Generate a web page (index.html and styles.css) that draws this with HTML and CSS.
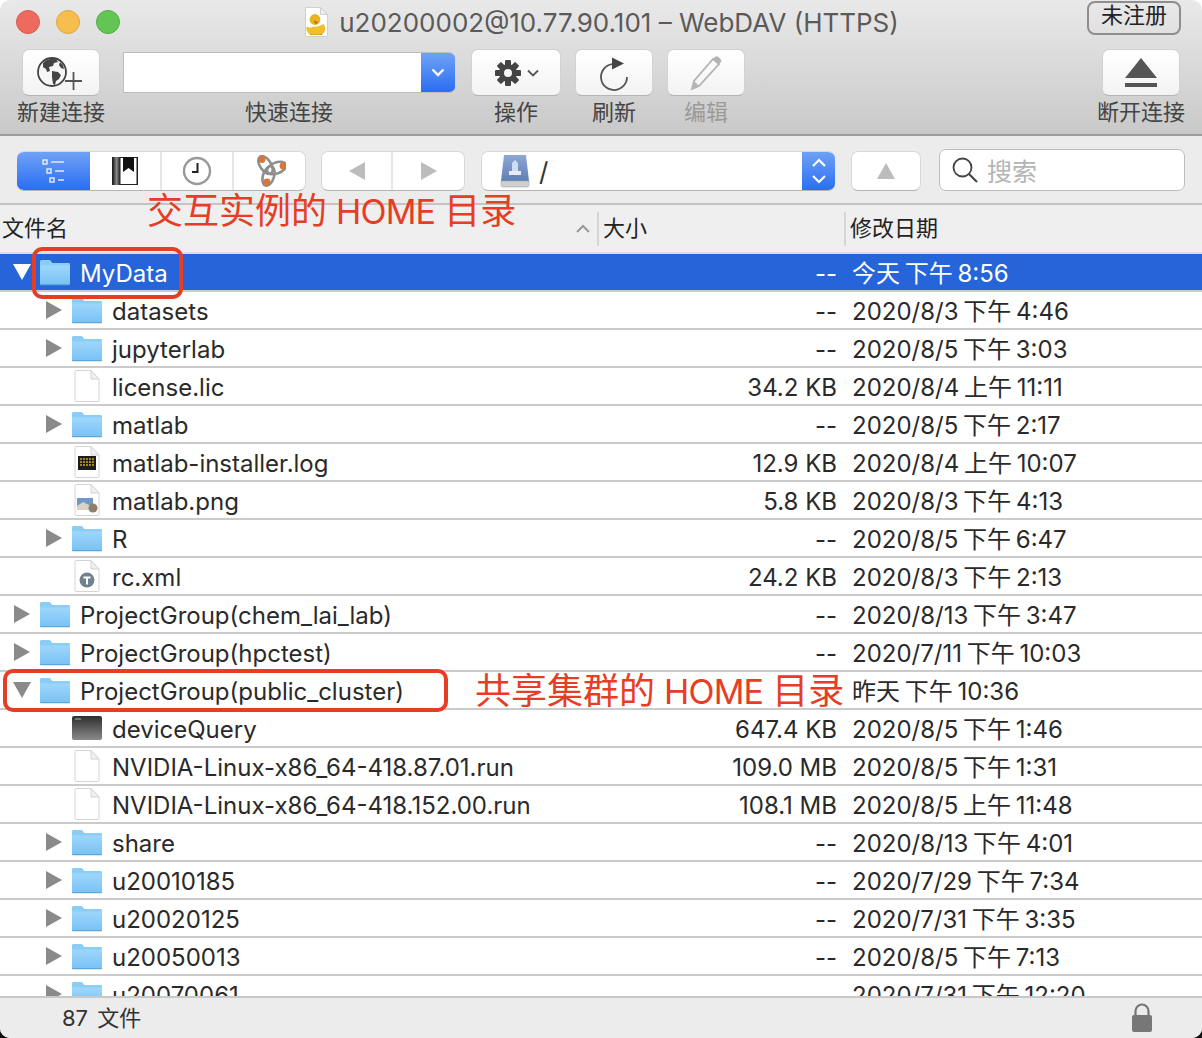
FILE: index.html
```html
<!DOCTYPE html>
<html lang="zh">
<head>
    <meta charset="UTF-8">
    <title>u20200002@10.77.90.101 – WebDAV (HTTPS)</title>
    <link rel="stylesheet" href="styles.css">
</head>
<body>
<svg class="defs" width="0" height="0">
    <defs>
        <linearGradient id="folderBody" x1="0" y1="0" x2="0" y2="1">
            <stop offset="0" stop-color="#9ed6fb"/>
            <stop offset="1" stop-color="#78c2f5"/>
        </linearGradient>
        <linearGradient id="termBody" x1="0" y1="0" x2="0" y2="1">
            <stop offset="0" stop-color="#2e2e2e"/>
            <stop offset="1" stop-color="#8a8a8a"/>
        </linearGradient>
        <linearGradient id="diskBody" x1="0" y1="0" x2="0" y2="1">
            <stop offset="0" stop-color="#8fa8d4"/>
            <stop offset="1" stop-color="#5f7fb8"/>
        </linearGradient>
        <linearGradient id="spine" x1="0" y1="0" x2="1" y2="0">
            <stop offset="0" stop-color="#222"/>
            <stop offset=".5" stop-color="#8a8a8a"/>
            <stop offset="1" stop-color="#222"/>
        </linearGradient>
        <symbol id="folder" viewBox="0 0 32 28">
            <path d="M1 6V3.500C1 2.500 1.800 2 2.600 2H10c1 0 1.400.4 2 1.200L13.400 5H29.500C30.400 5 31 5.600 31 6.500V8H1z" fill="#8ccdf8"/>
            <path d="M1 7.500h30v17.700c0 1-.7 1.800-1.600 1.800H2.600C1.700 27 1 26.200 1 25.200z" fill="url(#folderBody)"/>
            <path d="M1 26h30v.4c0 .4-.6.8-1.300.8H2.300C1.600 27.200 1 26.800 1 26.400z" fill="#5fa6d8"/>
        </symbol>
        <symbol id="page" viewBox="0 0 28 32">
            <path d="M3 .5h15l8 8.500v21.500a1 1 0 0 1-1 1H3a1 1 0 0 1-1-1V1.500a1 1 0 0 1 1-1z" fill="#fff" stroke="#d4d4d4"/>
            <path d="M18 .5V9h8z" fill="#f0f0f0" stroke="#d4d4d4"/>
        </symbol>
        <symbol id="triangle" viewBox="0 0 16 18">
            <path d="M0 0l16 9-16 9z"/>
        </symbol>
    </defs>
</svg>

<div class="window">
    <header class="toolbar">
        <div class="titlebar">
            <div class="lights">
                <span class="light red"></span>
                <span class="light yellow"></span>
                <span class="light green"></span>
            </div>
            <div class="title">
                <svg class="title-icon" viewBox="0 0 24 30">
                    <path d="M1.500 .5h15l7 7v22h-22z" fill="#fff" stroke="#cfcfcf"/>
                    <path d="M16.500 .5v7h7z" fill="#eee" stroke="#cfcfcf"/>
                    <path d="M2.500 19.500c2.500 1.500 5 1.500 7 0 3 .5 7-.5 10-2.500 2.500 3 2.500 7-.5 9.500-3.500 2-10 2-14 0-2.500-1.500-3-4.500-2.500-7z" fill="#efc02c"/>
                    <circle cx="11" cy="12.500" r="5.400" fill="#e8b422"/>
                    <path d="M9.500 13.500l5 1.500-3 2.500z" fill="#d8661a"/>
                    <path d="M5 26.500c4 1.800 10 1.800 14 0l-1.500 1.500h-11z" fill="#b98210"/>
                </svg>
                <span>u20200002@10.77.90.101 – WebDAV (HTTPS)</span>
            </div>
            <button class="badge">未注册</button>
        </div>
        <div class="tools">
            <div class="tool tool-new">
                <div class="tool-btn">
                    <svg width="48" height="36" viewBox="0 0 48 36">
                        <g transform="translate(-2 0)">
                            <circle cx="17" cy="17" r="14" fill="#f6f6f6" stroke="#444" stroke-width="1.800"/>
                            <path d="M8 8c3-4 9-5 13-4l2 3-4 1-1 3-4 1 1 4-3 1-1-3-3-2zM17 16l6 1 3 3-2 4-3 2-1 4-2-1-1-7zM25 7l3 3 1 4-3-1-2-3z" fill="#444"/>
                        </g>
                        <path d="M36.500 17v18M28 26h17" stroke="#555" stroke-width="1.800" fill="none"/>
                    </svg>
                </div>
                <span class="tool-label">新建连接</span>
            </div>
            <div class="tool tool-quick">
                <div class="combo">
                    <div class="combo-field"></div>
                    <div class="combo-arrow">
                        <svg width="14" height="9" viewBox="0 0 14 9"><path d="M1.500 1.500L7 7l5.500-5.500" fill="none" stroke="#fff" stroke-width="2.400"/></svg>
                    </div>
                </div>
                <span class="tool-label">快速连接</span>
            </div>
            <div class="tool tool-action">
                <div class="tool-btn wide">
                    <svg width="28" height="30" viewBox="0 0 28 30">
                        <g fill="#444">
                            <circle cx="14" cy="15" r="9"/>
                            <rect x="11" y="2" width="6" height="26" rx="1"/>
                            <rect x="11" y="2" width="6" height="26" rx="1" transform="rotate(45 14 15)"/>
                            <rect x="11" y="2" width="6" height="26" rx="1" transform="rotate(90 14 15)"/>
                            <rect x="11" y="2" width="6" height="26" rx="1" transform="rotate(135 14 15)"/>
                        </g>
                        <circle cx="14" cy="15" r="4" fill="#f4f4f4"/>
                    </svg>
                    <svg class="mini-chevron" width="12" height="8" viewBox="0 0 12 8"><path d="M1 1.500l5 5 5-5" fill="none" stroke="#555" stroke-width="1.800"/></svg>
                </div>
                <span class="tool-label">操作</span>
            </div>
            <div class="tool tool-std">
                <div class="tool-btn">
                    <svg width="32" height="38" viewBox="0 0 32 38">
                        <path d="M14 10.200A13 13 0 1 0 29 23" fill="none" stroke="#555" stroke-width="1.800"/>
                        <path d="M14 3.500l12 6-12 6z" fill="#444"/>
                    </svg>
                </div>
                <span class="tool-label">刷新</span>
            </div>
            <div class="tool tool-std disabled">
                <div class="tool-btn">
                    <svg width="34" height="36" viewBox="0 0 34 36">
                        <path d="M24 4l6 5L10 31l-7 3 2-8z" fill="none" stroke="#b4b4b4" stroke-width="1.800"/>
                        <path d="M26 2c1-1 2.500-1 3.500 0l2 2c1 1 1 2.500 0 3.500L30 9l-6-5z" fill="#b4b4b4"/>
                        <path d="M3 34l2-8 5 5z" fill="#b4b4b4"/>
                    </svg>
                </div>
                <span class="tool-label">编辑</span>
            </div>
            <div class="tool tool-eject">
                <div class="tool-btn">
                    <svg width="34" height="32" viewBox="0 0 34 32"><path d="M17 1l16 20H1z" fill="#555"/><rect x="1" y="26" width="32" height="4" fill="#555"/></svg>
                </div>
                <span class="tool-label">断开连接</span>
            </div>
        </div>
    </header>

    <nav class="navbar">
        <div class="segment views">
            <div class="seg active">
                <svg width="24" height="24" viewBox="0 0 24 24" fill="none" stroke="#dfeaff" stroke-width="1.500">
                    <rect x="1" y="1" width="4" height="4"/><path d="M9 3h13"/>
                    <rect x="5" y="10" width="4" height="4"/><path d="M13 12h9"/>
                    <rect x="8" y="19" width="4" height="4"/><path d="M16 21h6"/>
                </svg>
            </div>
            <div class="seg">
                <svg width="26" height="28" viewBox="0 0 26 28">
                    <rect width="26" height="28" fill="#222"/>
                    <rect x="1" width="7" height="28" fill="url(#spine)"/>
                    <path d="M8.500 1h16v26h-16z" fill="#fff"/>
                    <path d="M11 0h11v15l-5.500-4L11 15z" fill="#111"/>
                </svg>
            </div>
            <div class="seg">
                <svg width="30" height="30" viewBox="0 0 30 30">
                    <circle cx="15" cy="15" r="13" fill="#fff" stroke="#9a9a9a" stroke-width="2.400"/>
                    <path d="M15.500 7v9H10" fill="none" stroke="#222" stroke-width="2"/>
                </svg>
            </div>
            <div class="seg">
                <svg width="32" height="32" viewBox="0 0 32 32" fill="none" stroke="#8e8e8e" stroke-width="2.600">
                    <ellipse cx="11.500" cy="10" rx="5.500" ry="10" transform="rotate(-34 11.500 10)"/>
                    <ellipse cx="22.500" cy="13" rx="5.500" ry="10" transform="rotate(69 22.500 13)"/>
                    <ellipse cx="14.500" cy="21" rx="5.500" ry="10" transform="rotate(17 14.500 21)"/>
                    <g stroke="none" fill="#dd7436">
                        <circle cx="8" cy="4.500" r="3.400"/>
                        <circle cx="29" cy="11" r="3.400"/>
                        <circle cx="13" cy="27" r="3.400"/>
                    </g>
                </svg>
            </div>
        </div>
        <div class="segment history">
            <div class="seg"><svg class="grey-tri flip" width="16" height="18"><use href="#triangle"/></svg></div>
            <div class="seg"><svg class="grey-tri" width="16" height="18"><use href="#triangle"/></svg></div>
        </div>
        <div class="path">
            <svg class="disk" width="30" height="34" viewBox="0 0 30 34">
                <path d="M4 1h22l3 26H1z" fill="url(#diskBody)"/>
                <path d="M15 6l3 3v10h-6V9z" fill="#cfdcf2"/>
                <rect x="9" y="17" width="12" height="4" fill="#e6edf9"/>
                <path d="M1 27h28v4a2 2 0 0 1-2 2H3a2 2 0 0 1-2-2z" fill="#cfcfcf" stroke="#a8a8a8" stroke-width=".6"/>
            </svg>
            <span class="path-text">/</span>
            <div class="path-arrows">
                <svg width="16" height="28" viewBox="0 0 16 28" fill="none" stroke="#fff" stroke-width="2.200">
                    <path d="M2 9l6-6 6 6M2 19l6 6 6-6"/>
                </svg>
            </div>
        </div>
        <div class="up-btn"><svg class="grey-tri" width="18" height="16" viewBox="0 0 18 16"><path d="M9 0l9 16H0z"/></svg></div>
        <div class="search">
            <svg width="28" height="28" viewBox="0 0 28 28" fill="none" stroke="#444" stroke-width="1.800">
                <circle cx="11.500" cy="11.500" r="9"/><path d="M18 18l8 8" stroke-width="2.200"/>
            </svg>
            <span>搜索</span>
        </div>
    </nav>

    <div class="list-head">
        <div class="col-name"><span>文件名</span>
            <svg class="sort" width="14" height="9" viewBox="0 0 14 9"><path d="M1 8l6-6 6 6" fill="none" stroke="#9a9a9a" stroke-width="2"/></svg>
        </div>
        <div class="col-size">大小</div>
        <div class="col-date">修改日期</div>
    </div>

    <div class="list">
        <div class="row selected">
            <div class="name lvl0"><svg class="arrow open" width="16" height="18"><use href="#triangle"/></svg><svg class="ico"><use href="#folder"/></svg>MyData</div>
            <div class="size">--</div><div class="date">今天 下午 8:56</div>
        </div>
        <div class="row">
            <div class="name lvl1"><svg class="arrow" width="16" height="18"><use href="#triangle"/></svg><svg class="ico"><use href="#folder"/></svg>datasets</div>
            <div class="size">--</div><div class="date">2020/8/3 下午 4:46</div>
        </div>
        <div class="row">
            <div class="name lvl1"><svg class="arrow" width="16" height="18"><use href="#triangle"/></svg><svg class="ico"><use href="#folder"/></svg>jupyterlab</div>
            <div class="size">--</div><div class="date">2020/8/5 下午 3:03</div>
        </div>
        <div class="row">
            <div class="name lvl1"><span class="arrow-gap"></span><svg class="ico"><use href="#page"/></svg>license.lic</div>
            <div class="size">34.2 KB</div><div class="date">2020/8/4 上午 11:11</div>
        </div>
        <div class="row">
            <div class="name lvl1"><svg class="arrow" width="16" height="18"><use href="#triangle"/></svg><svg class="ico"><use href="#folder"/></svg>matlab</div>
            <div class="size">--</div><div class="date">2020/8/5 下午 2:17</div>
        </div>
        <div class="row">
            <div class="name lvl1"><span class="arrow-gap"></span><svg class="ico" viewBox="0 0 32 32"><use href="#page" width="32" height="32"/><rect x="7" y="10" width="18" height="14" fill="#1c1c1c"/><path d="M9 13h14M9 16h14M9 19h14" stroke="#c9a52c" stroke-width="1.500" stroke-dasharray="2 1"/></svg>matlab-installer.log</div>
            <div class="size">12.9 KB</div><div class="date">2020/8/4 上午 10:07</div>
        </div>
        <div class="row">
            <div class="name lvl1"><span class="arrow-gap"></span><svg class="ico" viewBox="0 0 32 32"><use href="#page" width="32" height="32"/><rect x="6" y="14" width="16" height="12" fill="#6f97c9"/><path d="M6 22l6-4 6 3 4-1v6H6z" fill="#d8d3c4"/><circle cx="22" cy="24" r="4.500" fill="#8d7f6a"/></svg>matlab.png</div>
            <div class="size">5.8 KB</div><div class="date">2020/8/3 下午 4:13</div>
        </div>
        <div class="row">
            <div class="name lvl1"><svg class="arrow" width="16" height="18"><use href="#triangle"/></svg><svg class="ico"><use href="#folder"/></svg>R</div>
            <div class="size">--</div><div class="date">2020/8/5 下午 6:47</div>
        </div>
        <div class="row">
            <div class="name lvl1"><span class="arrow-gap"></span><svg class="ico" viewBox="0 0 32 32"><use href="#page" width="32" height="32"/><circle cx="16" cy="20" r="7.500" fill="#70828c"/><path d="M12.500 16.500h7v2h-2.500v6h-2v-6h-2.500z" fill="#fff"/></svg>rc.xml</div>
            <div class="size">24.2 KB</div><div class="date">2020/8/3 下午 2:13</div>
        </div>
        <div class="row">
            <div class="name lvl0"><svg class="arrow" width="16" height="18"><use href="#triangle"/></svg><svg class="ico"><use href="#folder"/></svg>ProjectGroup(chem_lai_lab)</div>
            <div class="size">--</div><div class="date">2020/8/13 下午 3:47</div>
        </div>
        <div class="row">
            <div class="name lvl0"><svg class="arrow" width="16" height="18"><use href="#triangle"/></svg><svg class="ico"><use href="#folder"/></svg>ProjectGroup(hpctest)</div>
            <div class="size">--</div><div class="date">2020/7/11 下午 10:03</div>
        </div>
        <div class="row">
            <div class="name lvl0"><svg class="arrow open" width="16" height="18"><use href="#triangle"/></svg><svg class="ico"><use href="#folder"/></svg>ProjectGroup(public_cluster)</div>
            <div class="size size-hidden">--</div><div class="date">昨天 下午 10:36</div>
        </div>
        <div class="row">
            <div class="name lvl1"><span class="arrow-gap"></span><svg class="ico" viewBox="0 0 32 28"><rect x="1" y="2" width="30" height="24" rx="2" fill="url(#termBody)"/><path d="M4 5h6" stroke="#9bc59b" stroke-width="1"/></svg>deviceQuery</div>
            <div class="size">647.4 KB</div><div class="date">2020/8/5 下午 1:46</div>
        </div>
        <div class="row">
            <div class="name lvl1"><span class="arrow-gap"></span><svg class="ico"><use href="#page"/></svg>NVIDIA-Linux-x86_64-418.87.01.run</div>
            <div class="size">109.0 MB</div><div class="date">2020/8/5 下午 1:31</div>
        </div>
        <div class="row">
            <div class="name lvl1"><span class="arrow-gap"></span><svg class="ico"><use href="#page"/></svg>NVIDIA-Linux-x86_64-418.152.00.run</div>
            <div class="size">108.1 MB</div><div class="date">2020/8/5 上午 11:48</div>
        </div>
        <div class="row">
            <div class="name lvl1"><svg class="arrow" width="16" height="18"><use href="#triangle"/></svg><svg class="ico"><use href="#folder"/></svg>share</div>
            <div class="size">--</div><div class="date">2020/8/13 下午 4:01</div>
        </div>
        <div class="row">
            <div class="name lvl1"><svg class="arrow" width="16" height="18"><use href="#triangle"/></svg><svg class="ico"><use href="#folder"/></svg>u20010185</div>
            <div class="size">--</div><div class="date">2020/7/29 下午 7:34</div>
        </div>
        <div class="row">
            <div class="name lvl1"><svg class="arrow" width="16" height="18"><use href="#triangle"/></svg><svg class="ico"><use href="#folder"/></svg>u20020125</div>
            <div class="size">--</div><div class="date">2020/7/31 下午 3:35</div>
        </div>
        <div class="row">
            <div class="name lvl1"><svg class="arrow" width="16" height="18"><use href="#triangle"/></svg><svg class="ico"><use href="#folder"/></svg>u20050013</div>
            <div class="size">--</div><div class="date">2020/8/5 下午 7:13</div>
        </div>
        <div class="row">
            <div class="name lvl1"><svg class="arrow" width="16" height="18"><use href="#triangle"/></svg><svg class="ico"><use href="#folder"/></svg>u20070061</div>
            <div class="size">--</div><div class="date">2020/7/31 下午 12:20</div>
        </div>
    </div>

    <footer class="status">
        <span class="count">87 文件</span>
        <svg width="22" height="30" viewBox="0 0 22 30"><path d="M4.500 14V8a6.500 6.500 0 0 1 13 0v6" fill="none" stroke="#777" stroke-width="2.200"/><rect x="1" y="12" width="20" height="17" rx="2" fill="#777"/></svg>
    </footer>

    <!-- red notes drawn on the screenshot -->
    <div class="note-box box-home"></div>
    <div class="note-box box-public"></div>
    <div class="note-text text-home">交互实例的<span class="note-latin">HOME</span>目录</div>
    <div class="note-text text-public">共享集群的<span class="note-latin">HOME</span>目录</div>
</div>
</body>
</html>
```

FILE: styles.css
```css
* { box-sizing: border-box; }

html, body {
    margin: 0;
    padding: 0;
    height: 100%;
}
body {
    background: linear-gradient(#fff 50%, #111 50%);
    font-family: Inter, "Noto Sans CJK SC", sans-serif;
    color: #222;
    overflow: hidden;
}
.defs { position: absolute; }

.window {
    position: relative;
    width: 1202px;
    height: 1038px;
    border-radius: 10px;
    overflow: hidden;
    background: #fff;
    display: flex;
    flex-direction: column;
}

/* top toolbar */
.toolbar {
    height: 136px;
    flex: none;
    background: linear-gradient(#e9e9e9, #c9c9c9);
    border-bottom: 2px solid #9c9c9c;
}
.titlebar {
    height: 49px;
    display: grid;
    grid-template-columns: 1fr auto 1fr;
    align-items: start;
    padding: 0 21px 0 16px;
}
.lights {
    display: flex;
    gap: 16px;
    padding-top: 10px;
}
.light {
    width: 24px;
    height: 24px;
    border-radius: 50%;
}
.light.red { background: #ee6a5f; border: 1px solid #d85a50; }
.light.yellow { background: #f6bd4f; border: 1px solid #dea63f; }
.light.green { background: #62c554; border: 1px solid #52ad46; }
.title {
    display: flex;
    align-items: center;
    gap: 11px;
    height: 44px;
    font-size: 26px;
    color: #5a5a5a;
    transform: translateX(3px);
}
.title-icon { width: 24px; height: 30px; }
.badge {
    justify-self: end;
    width: 94px;
    height: 34px;
    margin: 1px 0 0;
    border: 2px solid #8e8e8e;
    border-radius: 8px;
    background: transparent;
    font-family: inherit;
    font-size: 22px;
    line-height: 24px;
    color: #222;
    padding: 0 0 6px;
}
.tools {
    display: flex;
    padding: 0 16px;
}
.tool {
    display: flex;
    flex-direction: column;
    align-items: center;
}
.tool-new { width: 90px; margin-right: 17px; }
.tool-quick { width: 332px; margin-right: 16px; }
.tool-action { width: 90px; margin-right: 14px; }
.tool-std { width: 78px; margin-right: 14px; }
.tool-eject { width: 90px; margin-left: auto; margin-right: 0; }
.tool-btn {
    width: 78px;
    height: 47px;
    background: linear-gradient(#fff, #f3f3f3);
    border-radius: 7px;
    border: 1px solid #d2d2d2;
    border-bottom-color: #b4b4b4;
    display: flex;
    align-items: center;
    justify-content: center;
    gap: 5px;
}
.tool-btn.wide { width: 90px; }
.tool-label {
    margin-top: 1px;
    font-size: 22px;
    line-height: 30px;
    color: #444;
    white-space: nowrap;
}
.disabled .tool-label { color: #9a9a9a; }
.combo {
    width: 332px;
    height: 41px;
    margin-top: 3px;
    margin-bottom: 3px;
    display: flex;
    border-radius: 0 6px 6px 0;
    overflow: hidden;
    border: 1px solid #bdbdbd;
    border-right: 0;
}
.combo-field { flex: 1; background: #fff; }
.combo-arrow {
    width: 34px;
    background: linear-gradient(#6fa2f5, #2a6df4);
    display: flex;
    align-items: center;
    justify-content: center;
}

/* second bar */
.navbar {
    height: 69px;
    flex: none;
    background: #ececec;
    border-bottom: 2px solid #c4c4c4;
    display: flex;
    align-items: flex-start;
    padding: 15px 17px 0;
}
.segment {
    display: flex;
    height: 40px;
    background: #fff;
    border-radius: 7px;
    overflow: hidden;
    border: 1px solid #d8d8d8;
    border-bottom-color: #b4b4b4;
}
.seg {
    display: flex;
    align-items: center;
    justify-content: center;
    border-right: 2px solid #e6e6e6;
}
.seg:last-child { border-right: 0; }
.views { width: 289px; margin-right: 15px; border-left: 0; }
.views .seg { width: 72px; }
.views .seg:last-child { flex: 1; }
.seg.active { width: 73px; background: linear-gradient(#6fa2f5, #2a6df4); border-right: 0; }
.history { width: 144px; margin-right: 16px; }
.history .seg { width: 72px; }
.grey-tri { fill: #bcbcbc; }
.flip { transform: scaleX(-1); }
.path {
    width: 354px;
    height: 40px;
    margin-right: 16px;
    display: flex;
    align-items: center;
    background: #fff;
    border-radius: 7px;
    overflow: hidden;
    padding-left: 18px;
    border: 1px solid #d8d8d8;
    border-bottom-color: #b4b4b4;
    border-right: 0;
}
.path-text {
    margin-left: 9px;
    font-size: 26px;
    color: #333;
    flex: 1;
}
.path-arrows {
    width: 33px;
    height: 40px;
    background: linear-gradient(#6fa2f5, #2a6df4);
    display: flex;
    align-items: center;
    justify-content: center;
}
.up-btn {
    width: 70px;
    height: 40px;
    margin-right: 18px;
    background: #fff;
    border-radius: 7px;
    border: 1px solid #d8d8d8;
    border-bottom-color: #b4b4b4;
    display: flex;
    align-items: center;
    justify-content: center;
}
.search {
    width: 246px;
    height: 42px;
    margin-top: -2px;
    background: #fff;
    border: 1px solid #bdbdbd;
    border-radius: 7px;
    display: flex;
    align-items: center;
    gap: 8px;
    padding-left: 11px;
    font-size: 25px;
    color: #b4b4b4;
}

/* column headers */
.list-head {
    height: 49px;
    flex: none;
    background: #efefef;
    border-bottom: 2px solid #dcdcdc;
    display: flex;
    font-size: 22px;
    line-height: 47px;
    color: #222;
}
.col-name {
    width: 597px;
    padding-left: 2px;
    display: flex;
    align-items: center;
    justify-content: space-between;
    padding-right: 7px;
}
.col-size {
    width: 247px;
    padding-left: 6px;
}
.col-date { padding-left: 6px; }
.col-size, .col-date {
    background: linear-gradient(#d6d6d6, #d6d6d6) left center / 2px 34px no-repeat;
}

/* file rows */
.list {
    flex: 1;
    overflow: hidden;
    background: #fff;
}
.row {
    height: 38px;
    display: flex;
    align-items: center;
    border-bottom: 2px solid #cbcbcb;
    font-size: 24px;
    color: #2a2a2a;
    white-space: nowrap;
}
.row.selected {
    background: #2564d9;
    color: #fff;
}
.name {
    width: 700px;
    display: flex;
    align-items: center;
    flex: none;
    overflow: hidden;
    padding-top: 2px;
}
.lvl0 { padding-left: 14px; }
.lvl1 { padding-left: 46px; }
.arrow {
    fill: #8a8a8a;
    flex: none;
    margin-top: -2px;
}
.arrow.open { transform: rotate(90deg); }
.selected .arrow { fill: #fff; }
.arrow-gap { width: 16px; flex: none; }
.ico {
    width: 32px;
    height: 32px;
    margin: -2px 9px 0;
    flex: none;
}
.size {
    width: 137px;
    flex: none;
    text-align: right;
    padding-top: 2px;
}
/* the "--" of this row sits under the red note in the source */
.size-hidden { visibility: hidden; }
.date {
    margin-left: 15px;
    margin-bottom: 2px;
    word-spacing: -2px;
}

/* status bar */
.status {
    height: 42px;
    flex: none;
    background: #ececec;
    border-top: 2px solid #c8c8c8;
    display: flex;
    align-items: center;
    justify-content: space-between;
    padding: 0 49px 0 62px;
    font-size: 22px;
    color: #333;
}
.count {
    word-spacing: 3px;
    margin-bottom: 4px;
}

/* annotations over the list */
.note-box {
    position: absolute;
    border: 4px solid #e63d25;
    border-radius: 10px;
}
.box-home { left: 32px; top: 247px; width: 151px; height: 52px; }
.box-public { left: 3px; top: 669px; width: 445px; height: 43px; }
.note-text {
    position: absolute;
    font-size: 36px;
    line-height: 40px;
    color: #e63d25;
    white-space: nowrap;
}
.note-latin {
    font-size: 34px;
    letter-spacing: -.8px;
    margin: 0 9px;
}
.text-home { left: 147px; top: 191px; }
.text-public { left: 475px; top: 671px; }
```
